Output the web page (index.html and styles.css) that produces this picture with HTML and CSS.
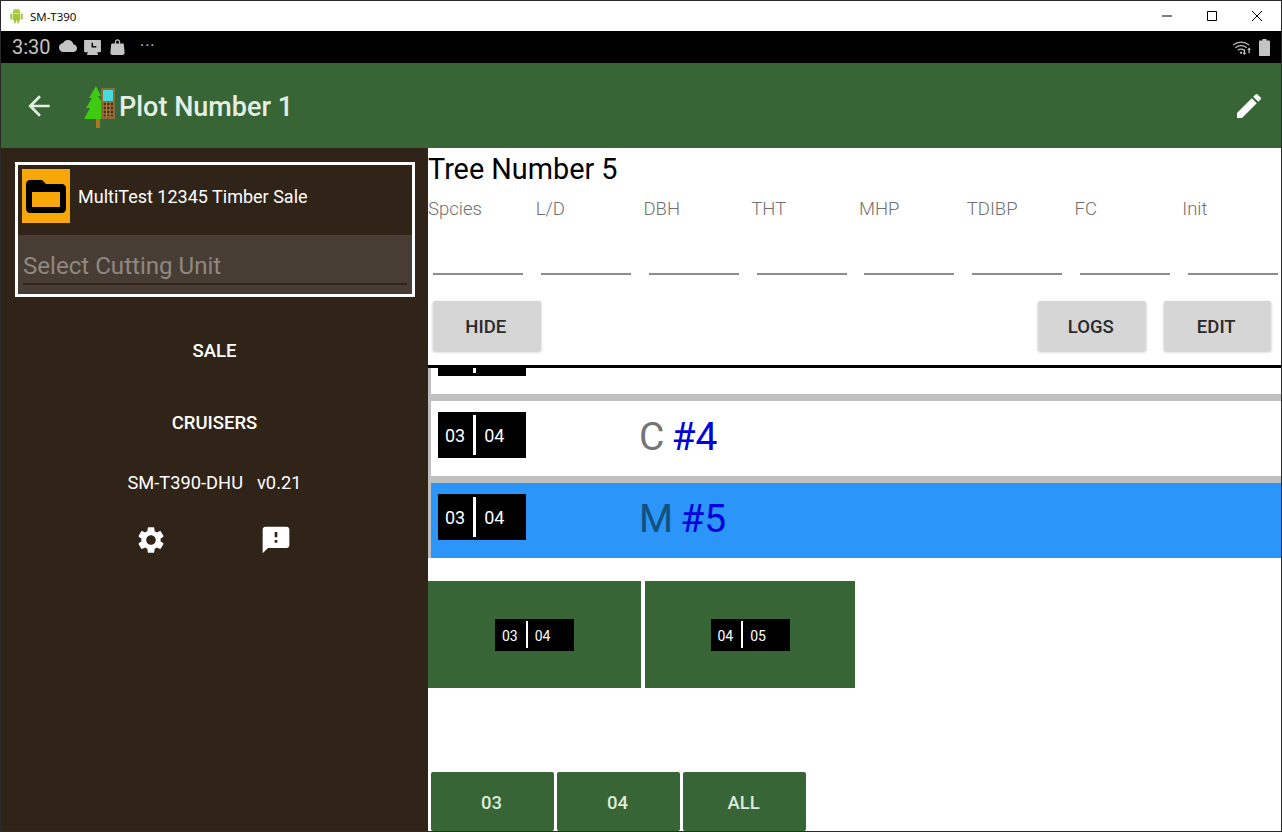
FILE: index.html
```html
<!DOCTYPE html>
<html lang="en">
<head>
  <meta charset="UTF-8">
  <title>SM-T390</title>
  <link rel="stylesheet" href="styles.css">
</head>
<body>
  <div class="window">

    <div class="titlebar">
      <svg class="android" viewBox="0 0 24 24"><path fill="#a4c639" d="M6 18c0 .55.45 1 1 1h1v3.5c0 .83.67 1.5 1.5 1.5s1.5-.67 1.5-1.5V19h2v3.5c0 .83.67 1.5 1.5 1.5s1.5-.67 1.5-1.5V19h1c.55 0 1-.45 1-1V8H6v10zM3.500 8C2.670 8 2 8.670 2 9.500v7c0 .83.67 1.500 1.500 1.500S5 17.330 5 16.500v-7C5 8.670 4.330 8 3.500 8zm17 0c-.83 0-1.500.67-1.500 1.500v7c0 .83.67 1.500 1.500 1.500s1.500-.67 1.500-1.500v-7c0-.83-.67-1.500-1.500-1.500zm-4.970-5.840l1.300-1.300c.2-.2.2-.51 0-.71-.2-.2-.51-.2-.71 0l-1.480 1.480C13.850 1.230 12.950 1 12 1c-.96 0-1.860.23-2.660.63L7.850.15c-.2-.2-.51-.2-.71 0-.2.2-.2.51 0 .71l1.310 1.310C6.970 3.260 6 5.010 6 7h12c0-1.990-.97-3.750-2.470-4.840zM10 5H9V4h1v1zm5 0h-1V4h1v1z"/></svg>
      <span class="window-name">SM-T390</span>
      <div class="window-controls">
        <svg viewBox="0 0 12 12"><path d="M1 6h10" stroke="#000" fill="none"/></svg>
        <svg viewBox="0 0 12 12"><path d="M1.500 1.500h9v9h-9z" stroke="#000" fill="none"/></svg>
        <svg viewBox="0 0 12 12"><path d="M1 1l10 10M11 1L1 11" stroke="#000" fill="none"/></svg>
      </div>
    </div>

    <div class="statusbar">
      <span class="clock">3:30</span>
      <svg class="status-icon cloud" viewBox="0 0 24 24"><path d="M19.350 10.040C18.670 6.590 15.640 4 12 4 9.110 4 6.600 5.640 5.350 8.040 2.340 8.360 0 10.910 0 14c0 3.310 2.690 6 6 6h13c2.760 0 5-2.240 5-5 0-2.640-2.050-4.780-4.650-4.960z"/></svg>
      <svg class="status-icon calendar" viewBox="0 0 18 16"><path fill-rule="evenodd" d="M1 0h16c.55 0 1 .45 1 1v11c0 .55-.45 1-1 1h-3l1 3H3l1-3H1c-.55 0-1-.45-1-1V1c0-.55.45-1 1-1zm7 3v5h5V6.500H9.500V3z"/></svg>
      <svg class="status-icon bag" viewBox="0 0 16 18"><path d="M5 5V3.500C5 1.600 6.300.3 8 .3s3 1.300 3 3.200V5h3.200c.5 0 .8.3.9.8l.9 9.700c.1 1.400-.9 2.500-2.300 2.500H2.300C.9 18-.1 16.900 0 15.500l.9-9.700c.1-.5.4-.8.9-.8zm1.300 0h3.400V3.500c0-1.100-.7-1.900-1.700-1.900s-1.700.8-1.700 1.900z"/></svg>
      <span class="more-dots">···</span>
      <span class="status-spacer"></span>
      <svg class="status-icon wifi" viewBox="0 0 22 18"><path d="M1 6.500a13 13 0 0 1 17 0M3.500 9.200a9.500 9.500 0 0 1 12 0M6 12a6 6 0 0 1 7 0" fill="none" stroke="#bdbdbd" stroke-width="1.300"/><path d="M8.500 13.500h2v2h-2zM13 17l-2-2.500h1.300V11h1.400v3.500H15zM18 9l2 2.500h-1.300V15h-1.400v-3.500H16z"/></svg>
      <svg class="status-icon battery" viewBox="0 0 11 17"><path d="M3.500 0h4v1.500H10c.6 0 1 .4 1 1V16c0 .6-.4 1-1 1H1c-.6 0-1-.4-1-1V2.500c0-.6.4-1 1-1h2.500z"/></svg>
    </div>

    <header class="appbar">
      <svg class="back-icon" viewBox="0 0 24 24"><path d="M20 11H7.830l5.590-5.590L12 4l-8 8 8 8 1.410-1.410L7.830 13H20v-2z"/></svg>
      <svg class="app-logo" viewBox="0 0 34 44">
        <rect x="13" y="34" width="4" height="10" fill="#a8781f"/>
        <path d="M13 2l5 10h-3l5 8h-2l3 15H1l6-11H3l6-10H6z" fill="#3ecb12"/>
        <rect x="18" y="4" width="14" height="31" fill="#8d6b36"/>
        <rect x="20" y="6" width="10" height="11" fill="#44dcdc"/>
        <rect x="20" y="18" width="10" height="15" fill="#b58a4f"/>
        <path d="M20.500 18.500h2.500v3h-2.500zM24 18.500h2.500v3H24zM27.500 18.500H30v3h-2.500zM20.500 22.500h2.500v3h-2.500zM24 22.500h2.500v3H24zM27.500 22.500H30v3h-2.500zM20.500 26.500h2.500v3h-2.500zM24 26.500h2.500v3H24zM27.500 26.500H30v3h-2.500zM20.500 30.500h2.500v2h-2.500zM24 30.500h2.500v2H24zM27.500 30.500H30v2h-2.500z" fill="#4a3212"/>
      </svg>
      <h1 class="app-title">Plot Number 1</h1>
      <svg class="edit-icon" viewBox="0 0 24 24"><path d="M3 17.250V21h3.750L17.810 9.940l-3.750-3.750L3 17.250zM20.710 7.040c.39-.39.39-1.020 0-1.410l-2.340-2.340c-.39-.39-1.020-.39-1.410 0l-1.830 1.830 3.750 3.750 1.830-1.830z"/></svg>
    </header>

    <div class="content">

      <aside class="drawer">
        <div class="sale-box">
          <div class="sale-header">
            <div class="folder-tile">
              <svg viewBox="0 0 24 24"><path fill-rule="evenodd" d="M20 6h-8l-2-2H4c-1.100 0-2 .9-2 2v12.500c0 1.100.9 2 2 2h16c1.100 0 2-.9 2-2V8c0-1.100-.9-2-2-2zM19 17.500H5V10h14z"/></svg>
            </div>
            <span class="sale-name">MultiTest 12345 Timber Sale</span>
          </div>
          <div class="unit-select">
            <span class="unit-placeholder">Select Cutting Unit</span>
          </div>
        </div>

        <nav class="drawer-nav">
          <a class="drawer-link">SALE</a>
          <a class="drawer-link">CRUISERS</a>
        </nav>

        <div class="device-info">
          <span>SM-T390-DHU</span>
          <span>v0.21</span>
        </div>

        <div class="drawer-icons">
          <svg viewBox="0 0 24 24"><path d="M19.140 12.940c.04-.3.06-.61.06-.94 0-.32-.02-.64-.07-.94l2.030-1.580c.18-.14.23-.41.12-.61l-1.920-3.320c-.12-.22-.37-.29-.59-.22l-2.390.96c-.5-.38-1.030-.7-1.620-.94l-.36-2.540c-.04-.24-.24-.41-.48-.41h-3.840c-.24 0-.43.17-.47.41l-.36 2.540c-.59.24-1.130.57-1.620.94l-2.390-.96c-.22-.08-.47 0-.59.22L2.740 8.870c-.12.21-.08.47.12.61l2.030 1.580c-.05.3-.09.63-.09.94s.02.64.07.94l-2.030 1.580c-.18.14-.23.41-.12.61l1.920 3.320c.12.22.37.29.59.22l2.390-.96c.5.38 1.030.7 1.620.94l.36 2.540c.05.24.24.41.48.41h3.840c.24 0 .44-.17.47-.41l.36-2.540c.59-.24 1.130-.56 1.620-.94l2.390.96c.22.08.47 0 .59-.22l1.920-3.320c.12-.22.07-.47-.12-.61l-2.010-1.580zM12 15.600c-1.980 0-3.600-1.620-3.600-3.600s1.620-3.600 3.600-3.600 3.600 1.620 3.600 3.600-1.620 3.600-3.600 3.600z"/></svg>
          <svg viewBox="0 0 24 24"><path d="M20 2H4c-1.100 0-1.990.9-1.990 2L2 22l4-4h14c1.100 0 2-.9 2-2V4c0-1.100-.9-2-2-2zm-7 12h-2v-2h2v2zm0-4h-2V6h2v4z"/></svg>
        </div>
      </aside>

      <main class="main">
        <h2 class="tree-title">Tree Number 5</h2>

        <div class="field-grid">
          <div class="field"><label>Spcies</label><div class="field-line"></div></div>
          <div class="field"><label>L/D</label><div class="field-line"></div></div>
          <div class="field"><label>DBH</label><div class="field-line"></div></div>
          <div class="field"><label>THT</label><div class="field-line"></div></div>
          <div class="field"><label>MHP</label><div class="field-line"></div></div>
          <div class="field"><label>TDIBP</label><div class="field-line"></div></div>
          <div class="field"><label>FC</label><div class="field-line"></div></div>
          <div class="field"><label>Init</label><div class="field-line"></div></div>
        </div>

        <div class="action-row">
          <button class="action-btn">HIDE</button>
          <span class="action-spacer"></span>
          <button class="action-btn">LOGS</button>
          <button class="action-btn">EDIT</button>
        </div>

        <div class="tree-list">
          <div class="tree-rows">
            <div class="tree-row">
              <div class="log-tag"><span>03</span><i></i><span>04</span></div>
              <div class="tree-label">C <b>#3</b></div>
            </div>
            <div class="tree-row">
              <div class="log-tag"><span>03</span><i></i><span>04</span></div>
              <div class="tree-label">C <b>#4</b></div>
            </div>
            <div class="tree-row selected">
              <div class="log-tag"><span>03</span><i></i><span>04</span></div>
              <div class="tree-label">M <b>#5</b></div>
            </div>
          </div>
        </div>

        <div class="tiles">
          <div class="tile tile-first">
            <div class="log-tag small"><span>03</span><i></i><span>04</span></div>
          </div>
          <div class="tile">
            <div class="log-tag small"><span>04</span><i></i><span>05</span></div>
          </div>
        </div>

        <div class="unit-tabs">
          <button class="unit-tab">03</button>
          <button class="unit-tab">04</button>
          <button class="unit-tab">ALL</button>
        </div>
      </main>

    </div>
  </div>
</body>
</html>
```

FILE: styles.css
```css
* {
  box-sizing: border-box;
}

html, body {
  margin: 0;
  height: 100%;
  overflow: hidden;
}

body {
  font-family: Roboto, "Liberation Sans", sans-serif;
}

.window {
  width: 1282px;
  height: 832px;
  border: 1px solid #2b2b2b;
  display: flex;
  flex-direction: column;
  background: #fff;
}

/* windows title bar */
.titlebar {
  height: 30px;
  flex: none;
  display: flex;
  align-items: center;
  padding-left: 8px;
  background: #fff;
}

.android {
  width: 15px;
  height: 16px;
}

.window-name {
  margin-left: 6px;
  font-family: "Open Sans", "Liberation Sans", sans-serif;
  font-size: 11.500px;
  color: #000;
}

.window-controls {
  margin-left: auto;
  display: flex;
  gap: 33px;
  padding-right: 18px;
}

.window-controls svg {
  width: 12px;
  height: 12px;
}

/* android status bar */
.statusbar {
  height: 32px;
  flex: none;
  display: flex;
  align-items: center;
  background: #000;
  padding: 0 11px;
  color: #c4c4c4;
}

.clock {
  font-size: 20px;
  width: 47px;
}

.status-icon {
  fill: #c4c4c4;
  flex: none;
}

.cloud {
  width: 18px;
  height: 18px;
  margin-top: -3px;
}

.calendar {
  width: 17px;
  height: 15px;
  margin-left: 7px;
}

.bag {
  width: 15px;
  height: 16px;
  margin-left: 9px;
}

.more-dots {
  margin-left: 15px;
  font-size: 16px;
  letter-spacing: 1px;
  margin-top: -4px;
}

.status-spacer {
  flex: 1;
}

.wifi {
  width: 21px;
  height: 17px;
}

.battery {
  width: 11px;
  height: 17px;
  margin-left: 6px;
}

/* app bar */
.appbar {
  height: 85px;
  flex: none;
  display: flex;
  align-items: center;
  background: #376535;
  padding: 0 16px 0 22px;
}

.back-icon {
  width: 32px;
  height: 32px;
  fill: #e4efe4;
  flex: none;
}

.app-logo {
  width: 34px;
  height: 44px;
  margin-left: 28px;
  flex: none;
}

.app-title {
  margin: 2px 0 0 2px;
  font-size: 27px;
  font-weight: 500;
  color: #e4efe4;
}

.edit-icon {
  width: 32px;
  height: 32px;
  margin-left: auto;
  fill: #fff;
}

.content {
  flex: 1;
  display: flex;
  min-height: 0;
}

/* left drawer */
.drawer {
  width: 427px;
  flex: none;
  background: #302318;
  padding: 14px 0 0 14px;
  color: #fff;
}

.sale-box {
  width: 400px;
  height: 135px;
  border: 3px solid #fff;
}

.sale-header {
  height: 70px;
  display: flex;
  align-items: flex-start;
  padding: 4px 0 0 4px;
}

.folder-tile {
  width: 48px;
  height: 54px;
  background: #f7a707;
  display: flex;
  align-items: center;
  justify-content: center;
}

.folder-tile svg {
  width: 48px;
  height: 48px;
  fill: #000;
}

.sale-name {
  margin: 17px 0 0 8px;
  font-size: 18px;
  line-height: 22px;
}

.unit-select {
  height: 59px;
  background: #473d34;
  padding: 17px 5px 0 5px;
}

.unit-placeholder {
  display: block;
  height: 33px;
  border-bottom: 2px solid #302318;
  font-size: 24.100px;
  line-height: 28px;
  color: #8f8880;
}

.drawer-nav {
  margin: 35px 14px 0 0;
  display: flex;
  flex-direction: column;
  gap: 36px;
}

.drawer-link {
  height: 36px;
  line-height: 38px;
  text-align: center;
  font-size: 18.500px;
  font-weight: 500;
}

.device-info {
  margin: 32px 14px 0 0;
  display: flex;
  justify-content: center;
  gap: 14px;
  font-size: 18.300px;
  line-height: 22px;
}

.drawer-icons {
  margin: 30px 16px 0 0;
  display: flex;
  justify-content: center;
  gap: 93px;
}

.drawer-icons svg {
  width: 32px;
  height: 32px;
  fill: #fff;
}

/* main column */
.main {
  flex: 1;
  min-width: 0;
  display: flex;
  flex-direction: column;
  overflow: hidden;
}

.tree-title {
  margin: 5px 0 0;
  font-size: 28.800px;
  font-weight: 400;
  line-height: 33px;
  color: #000;
}

.field-grid {
  display: grid;
  grid-template-columns: repeat(8, 107.75px);
  margin-top: 13px;
}

.field label {
  display: block;
  height: 21px;
  font-size: 18.500px;
  font-weight: 300;
  line-height: 21px;
  color: #707070;
}

.field-line {
  width: 90px;
  height: 2px;
  margin: 53px 0 0 5.300px;
  background: #8c8c8c;
}

.action-row {
  display: flex;
  gap: 18px;
  margin-top: 26px;
  padding: 0 10px 0 5px;
}

.action-spacer {
  flex: 1;
}

.action-btn {
  width: 107.500px;
  height: 50px;
  padding: 2px 8px 0 6px;
  border: none;
  border-radius: 2px;
  background: #d6d6d6;
  box-shadow: 0 1px 3px rgba(0, 0, 0, 0.25);
  font-family: inherit;
  font-size: 18.500px;
  font-weight: 500;
  color: #2a2a2a;
}

.tree-list {
  flex: none;
  height: 193px;
  margin-top: 14px;
  border-top: 3px solid #000;
  overflow: hidden;
  background: #fff;
}

.tree-rows {
  margin-top: -49px;
  display: flex;
  flex-direction: column;
  gap: 7px;
  background: #c0c0c0;
  padding-left: 3px;
}

.tree-row {
  height: 75px;
  display: flex;
  align-items: flex-start;
  background: #fff;
  padding: 11px 0 0 7px;
}

.tree-row.selected {
  background: #2b95f9;
}

.tree-label {
  margin-left: 113px;
  font-size: 39px;
  line-height: 50px;
  word-spacing: -2.500px;
  color: #757575;
}

.selected .tree-label {
  color: #11507f;
}

.tree-label b {
  font-weight: 400;
  color: #0000dc;
}

.log-tag {
  width: 88px;
  height: 46px;
  display: flex;
  align-items: center;
  background: #000;
  color: #fff;
  font-size: 18px;
  padding-left: 7px;
}

.log-tag i {
  width: 3px;
  height: 40px;
  margin: 0 8px 0 8px;
  background: #fff;
}

.log-tag.small {
  width: 79px;
  height: 32px;
  font-size: 14px;
}

.log-tag.small span {
  padding-top: 2px;
}

.log-tag.small i {
  width: 2px;
  height: 27px;
  margin: 0 7px 0 8px;
}

.tiles {
  display: flex;
  gap: 4px;
  margin-top: 23px;
}

.tile {
  width: 210px;
  height: 107px;
  background: #376535;
  display: flex;
  align-items: center;
  justify-content: center;
}

.tile-first {
  width: 213px;
}

.unit-tabs {
  display: flex;
  gap: 3px;
  margin-top: 84px;
  padding-left: 3px;
}

.unit-tab {
  width: 123px;
  height: 59px;
  padding: 2px 8px 0 6px;
  border: none;
  border-radius: 2px;
  background: #376535;
  font-family: inherit;
  font-size: 18.500px;
  font-weight: 500;
  color: #dcebdc;
}
```
